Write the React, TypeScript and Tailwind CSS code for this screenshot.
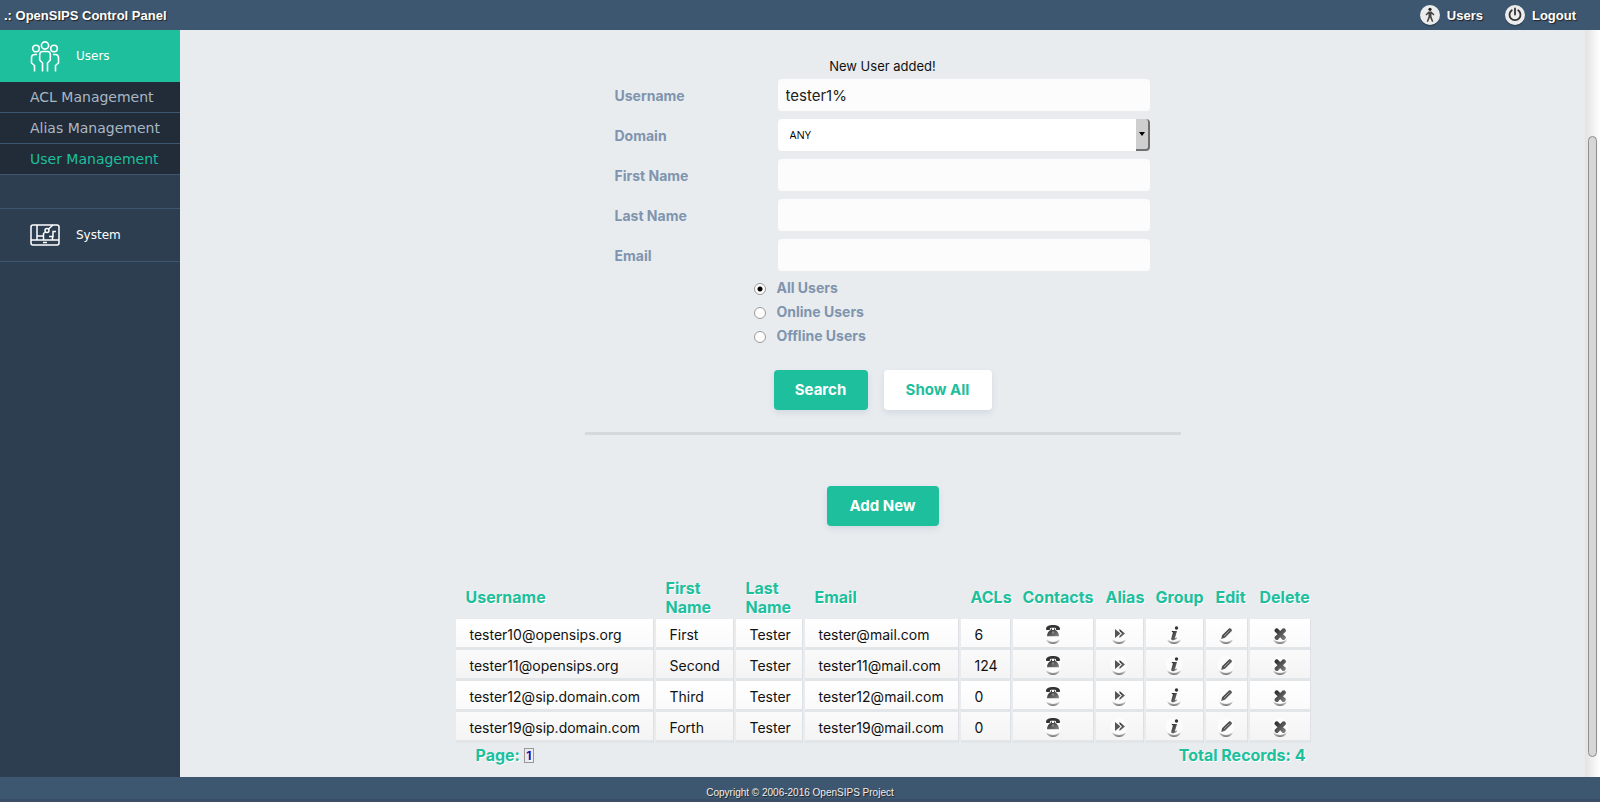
import React, { useState } from 'react'

const users = [
    { username: 'tester10@opensips.org', first: 'First', last: 'Tester', email: 'tester@mail.com', acls: 6 },
    { username: 'tester11@opensips.org', first: 'Second', last: 'Tester', email: 'tester11@mail.com', acls: 124 },
    { username: 'tester12@sip.domain.com', first: 'Third', last: 'Tester', email: 'tester12@mail.com', acls: 0 },
    { username: 'tester19@sip.domain.com', first: 'Forth', last: 'Tester', email: 'tester19@mail.com', acls: 0 },
]

const columns = [
    { label: 'Username', width: 'w-[197px]' },
    { label: 'First Name', width: 'w-[77px]' },
    { label: 'Last Name', width: 'w-[66px]' },
    { label: 'Email', width: 'w-[153px]' },
    { label: 'ACLs', width: 'w-[49px]' },
    { label: 'Contacts', width: 'w-[80px]' },
    { label: 'Alias', width: 'w-[47px]' },
    { label: 'Group', width: 'w-[57px]' },
    { label: 'Edit', width: 'w-[41px]' },
    { label: 'Delete', width: 'w-[60px]' },
]

const subMenu = ['ACL Management', 'Alias Management', 'User Management']

const statuses = ['All Users', 'Online Users', 'Offline Users']

const actions = ['Contacts', 'Alias', 'Group', 'Edit', 'Delete']

// White disc with the grey rim at its lower edge, shared by all row actions
const ActionIcon = ({ name }: { name: string }) => (
    <svg width="20" height="20" viewBox="0 0 20 20" aria-hidden="true">
        <defs>
            <linearGradient id={`glyph-${name}`} x1="0" y1="0" x2="1" y2="1">
                <stop offset="0" stopColor="#222" />
                <stop offset="1" stopColor="#888" />
            </linearGradient>
            <linearGradient id={`rim-${name}`} x1="0" y1="0" x2="0" y2="1">
                <stop offset="0.7" stopColor="#666" stopOpacity="0" />
                <stop offset="1" stopColor="#666" />
            </linearGradient>
        </defs>
        <circle cx="10" cy="11" r="8" fill={`url(#rim-${name})`} />
        <circle cx="10" cy="8.500" r="8.500" fill="#fcfcfc" />
        <g fill={`url(#glyph-${name})`}>
            {name === 'Contacts' && (
                <>
                    <path d="M3 3.800C3 1.400 6 0 10 0s7 1.400 7 3.800c0 .8-.3 1.200-1 1.200h-2c-.7 0-1-.4-1-1v-.9C11 2.700 9 2.700 7 3.100V4c0 .6-.3 1-1 1H4c-.7 0-1-.4-1-1.200z" fill="#333" />
                    <path d="M7.800 3.500h1.200V5h2V3.500h1.200V5c2 .8 3.800 3 3.800 6.300H4C4 8 5.800 5.800 7.800 5z" />
                    <circle cx="10" cy="7.500" r="1.300" fill="#888" />
                </>
            )}
            {name === 'Alias' && (
                <>
                    <path d="M6 4l5.500 4.500L6 13z" fill="#555" />
                    <path d="M10.500 4l5.500 4.500-5.500 4.500V11l2.500-2.500L10.500 6z" />
                </>
            )}
            {name === 'Group' && (
                <>
                    <circle cx="12.500" cy="3" r="1.700" fill="#333" />
                    <path d="M8 6h5l-2 7c-.1.600.4.500 1.600-.4l.4.600C11 15 9.500 15.500 8.300 15.200c-1.300-.3-1.200-1.200-.9-2.200L9 7.300l-1.400-.4z" />
                </>
            )}
            {name === 'Edit' && (
                <>
                    <path d="M5.200 14l.9-3.700 6.900-6.800c1-1 3.800 1.400 2.800 2.500L9 12.800z" />
                    <path d="M8 11l5.500-5.500" stroke="#bbb" strokeWidth="0.700" />
                </>
            )}
            {name === 'Delete' && <path d="M4.500 5L6 3.300 7.800 3.500l2.400 2.600 2.500-2.600 1.700-.2L16 5l-.2 1.500L13 9.200l2.800 2.600v1.500L14.300 15h-1.700l-2.400-2.700L7.800 15H6l-1.500-1.700.2-1.500 2.800-2.600-2.800-2.700z" />}
        </g>
    </svg>
)

const PeopleIcon = () => (
    <svg width="30" height="31" viewBox="0 0 30 31" fill="none" stroke="#fff" strokeWidth="1.600" aria-hidden="true">
        <circle cx="15" cy="4.500" r="3.600" />
        <circle cx="6" cy="7.500" r="3.300" />
        <circle cx="24" cy="7.500" r="3.300" />
        <path d="M12.500 30.500V22l-2.800-3v-5.500c0-2 1-3 3-3h4.600c2 0 3 1 3 3V19l-2.800 3v8.500" />
        <path d="M7 13.500H5C2.500 13.500 1.500 14.500 1.500 17v5L4.500 24.500v6M23 13.500h2c2.500 0 3.500 1 3.500 3.500v5l-3 2.500v6" />
    </svg>
)

const SystemIcon = () => (
    <svg width="30" height="22" viewBox="0 0 30 22" fill="none" stroke="#fff" strokeWidth="1.500" aria-hidden="true">
        <rect x="1" y="1" width="28" height="20" rx="2" />
        <path d="M1 16h28M7 1v15M7 12h6M13.500 16V9.500l2-1.500M18.500 5L23 1M19 12.500h4v-5h3M22.500 12.500V16M13 18.500h4" />
        <circle cx="17" cy="6.500" r="2" />
    </svg>
)

const HeaderDisc = ({ children }: { children: React.ReactNode }) => (
    <svg width="20" height="22" viewBox="0 0 20 22" aria-hidden="true">
        <circle cx="10" cy="11.500" r="10" fill="#26384a" opacity="0.600" />
        <circle cx="10" cy="10" r="10" fill="#ececec" />
        {children}
    </svg>
)

const TextField = ({ label, id, value = '' }: { label: string; id: string; value?: string }) => {
    const [text, setText] = useState(value)
    return (
        <div className="flex items-center">
            <label htmlFor={id} className="w-[163px] pt-px text-sm font-bold text-[#7f94ae]">{label}</label>
            <input
                id={id}
                type="text"
                value={text}
                onChange={(e) => setText(e.target.value)}
                className="h-8 min-w-0 flex-1 rounded bg-[#fcfcfc] px-2 text-[15px] text-[#222]"
            />
        </div>
    )
}

const App = () => {
    const [status, setStatus] = useState('All Users')

    return (
        <div className="flex min-h-screen flex-col bg-[#e8ecef] font-['Inter','Liberation_Sans',sans-serif]">
            <header className="flex h-[30px] items-center justify-between bg-[#3e5771] pt-px pr-6 pl-1 font-['Liberation_Sans',sans-serif] text-[13px] font-bold text-white [text-shadow:1px_1px_1px_#222]">
                <h1>.: OpenSIPS Control Panel</h1>
                <nav className="flex gap-[22px]">
                    <a href="#users" className="flex items-center gap-[7px]">
                        <HeaderDisc>
                            <circle cx="10" cy="4.300" r="1.600" fill="#222" />
                            <path d="M8.500 6.500h3l3 3-.8.900-2.200-1.600v2.700l1.800 5-1.300.5L10 12.500 8 17l-1.300-.5 1.800-5V8.800l-2.200 1.600-.8-.9z" fill="#444" />
                        </HeaderDisc>
                        Users
                    </a>
                    <a href="#logout" className="flex items-center gap-[7px]">
                        <HeaderDisc>
                            <path d="M6.800 5.200a5.500 5.500 0 1 0 6.400 0M10 3.500v6" fill="none" stroke="#333" strokeWidth="1.800" strokeLinecap="round" />
                        </HeaderDisc>
                        Logout
                    </a>
                </nav>
            </header>

            <div className="flex flex-1">
                {/* SIDEBAR */}
                <aside className="w-[180px] shrink-0 bg-[#2d3e50] font-['DejaVu_Sans',sans-serif] text-white">
                    <a href="#users" className="flex h-[52px] items-center gap-4 bg-[#1dbf9c] pl-[30px] text-xs">
                        <PeopleIcon />
                        Users
                    </a>
                    <ul>
                        {subMenu.map((item) => (
                            <li key={item} className="border-b border-[#3e5771] bg-[#212c38]">
                                <a
                                    href="#menu"
                                    className={`flex h-[30px] items-center pl-[30px] text-sm ${item === 'User Management' ? 'text-[#1dbf9c]' : 'text-[#aab7c4]'}`}
                                >
                                    {item}
                                </a>
                            </li>
                        ))}
                    </ul>
                    <a href="#system" className="mt-[33px] flex h-[54px] items-center gap-4 border-y border-[#3e5771] pl-[30px] text-xs">
                        <SystemIcon />
                        System
                    </a>
                </aside>

                <main className="flex min-w-0 flex-1 flex-col items-center pt-[26px]">
                    {/* SEARCH FORM */}
                    <form className="flex w-full max-w-[596px] flex-col border-b-3 border-[#d5d9dd] pb-[22px]" onSubmit={(e) => e.preventDefault()}>
                        <p className="h-[23px] text-center text-[13px] leading-5 text-[#111]">New User added!</p>
                        <div className="flex flex-col gap-2 pr-[31px] pl-[30px]">
                            <TextField label="Username" id="username" value="tester1%" />
                            <div className="flex items-center">
                                <label htmlFor="domain" className="w-[163px] pt-px text-sm font-bold text-[#7f94ae]">Domain</label>
                                <div className="relative min-w-0 flex-1">
                                    <select id="domain" className="block h-8 w-full appearance-none rounded bg-white px-3 font-['Open_Sans',sans-serif] text-[11px] text-black">
                                        <option>ANY</option>
                                    </select>
                                    <span className="pointer-events-none absolute inset-y-0 right-0 flex w-[14px] items-center justify-center rounded-r-sm border-r-2 border-b-2 border-[#707070] bg-[#cfcfcf]">
                                        <svg width="6" height="4" viewBox="0 0 6 4"><path d="M0 0h6L3 4z" /></svg>
                                    </span>
                                </div>
                            </div>
                            <TextField label="First Name" id="first-name" />
                            <TextField label="Last Name" id="last-name" />
                            <TextField label="Email" id="email" />
                        </div>
                        <div className="mt-[5px] flex flex-col pl-[169px]">
                            {statuses.map((item) => (
                                <label key={item} className="flex h-6 items-center gap-[11px] text-sm font-bold text-[#7f94ae]">
                                    <input
                                        type="radio"
                                        name="status"
                                        checked={status === item}
                                        onChange={() => setStatus(item)}
                                        className="mt-0.5 size-3 appearance-none rounded-full border border-[#999] bg-white checked:bg-[radial-gradient(circle,#000_0_2px,#fff_3px)]"
                                    />
                                    {item}
                                </label>
                            ))}
                        </div>
                        <div className="mt-[22px] flex justify-center gap-4">
                            <button type="submit" className="h-10 w-[94px] rounded bg-[#1dbf9c] text-[15px] font-bold text-white shadow-[0_3px_6px_#d3d9e1]">Search</button>
                            <button type="button" className="h-10 w-[108px] rounded bg-white text-[15px] font-bold text-[#1dbf9c] shadow-[0_3px_6px_#d3d9e1]">Show All</button>
                        </div>
                    </form>

                    <button type="button" className="mt-[51px] h-10 w-28 rounded bg-[#1dbf9c] text-[15px] font-bold text-white shadow-[0_3px_6px_#d3d9e1]">Add New</button>

                    {/* RESULTS */}
                    <table className="mt-12 w-full max-w-[860px] table-fixed border-separate border-spacing-x-[3px] border-spacing-y-0 text-sm leading-5 text-[#111]">
                        <thead>
                            <tr className="h-[45px] text-left text-base leading-[19px] text-[#1dbf9c] [text-shadow:1px_1px_0_#fff]">
                                {columns.map((column) => (
                                    <th key={column.label} scope="col" className={`${column.width} pt-0.5 pl-[10px] font-bold`}>{column.label}</th>
                                ))}
                            </tr>
                        </thead>
                        <tbody>
                            {users.map((user) => (
                                <tr key={user.username} className="group h-[31px]">
                                    {[user.username, user.first, user.last, user.email, user.acls].map((value, i) => (
                                        <td key={i} className="border-b-3 border-[#e3e6e9] bg-linear-to-b from-white to-[#fafafa] bg-clip-padding pt-[3px] pl-[14px] whitespace-nowrap shadow-[1px_0_0_#dde1e5] group-even:from-[#fafafa] group-even:to-[#f4f4f4]">{value}</td>
                                    ))}
                                    {actions.map((action) => (
                                        <td key={action} className="border-b-3 border-[#e3e6e9] bg-linear-to-b from-white to-[#fafafa] bg-clip-padding pt-[3px] shadow-[1px_0_0_#dde1e5] group-even:from-[#fafafa] group-even:to-[#f4f4f4]">
                                            <a href="#action" aria-label={`${action} ${user.username}`} className="flex justify-center">
                                                <ActionIcon name={action} />
                                            </a>
                                        </td>
                                    ))}
                                </tr>
                            ))}
                        </tbody>
                    </table>
                    <div className="flex w-full max-w-[854px] items-center justify-between pt-0.5 pr-1 pl-5 text-base leading-5 font-bold text-[#1dbf9c] [text-shadow:1px_1px_0_#fff]">
                        <span className="flex items-center gap-1">
                            Page:
                            <a href="#page" className="h-[15px] w-[10px] border border-[#999] text-center text-xs leading-[13px] text-[#1a0dab]">1</a>
                        </span>
                        <span>Total Records: 4</span>
                    </div>
                </main>

                {/* SCROLLBAR */}
                <div className="flex w-[15px] shrink-0 flex-col bg-linear-to-r from-[#e2e2e2] to-white px-[3px] pt-[106px] pb-5">
                    <div className="flex-1 rounded-full border border-[#8e8e8e] bg-[#d6d6d6]" />
                </div>
            </div>

            <footer className="flex h-[25px] items-center justify-center border-b-3 border-[#3a4f66] bg-[#3e5771] pt-2 font-['Liberation_Sans',sans-serif] text-[10px] text-[#eee] [text-shadow:1px_1px_1px_#222]">
                Copyright © 2006-2016 OpenSIPS Project
            </footer>
        </div>
    )
}

export default App
